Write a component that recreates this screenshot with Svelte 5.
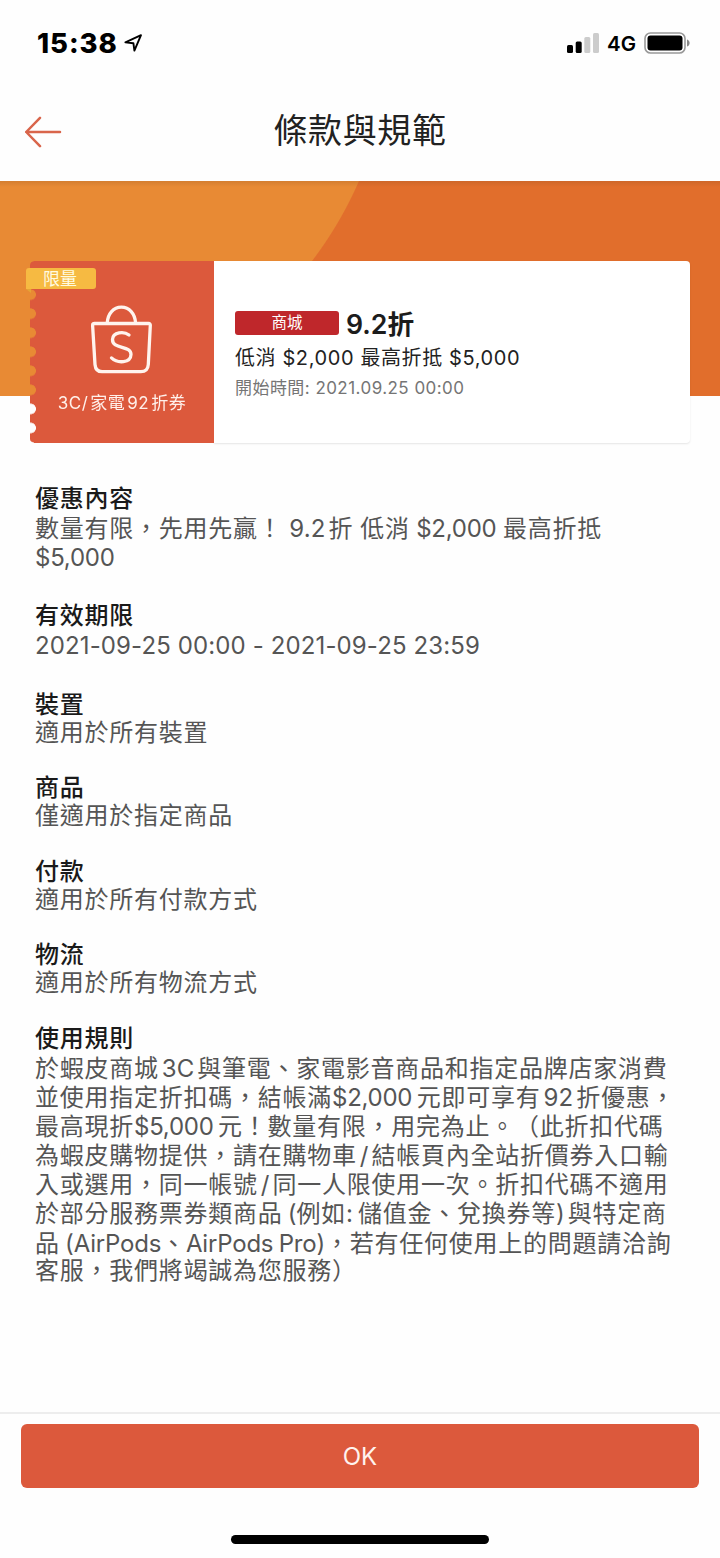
<script>
  const sections = [
    { title: '優惠內容', mixed: true, lines: ['數量有限，先用先贏！ 9.2折 低消 $2,000 最高折抵', '$5,000'] },
    { title: '有效期限', mixed: true, lines: ['2021-09-25 00:00 - 2021-09-25 23:59'] },
    { title: '裝置', lines: ['適用於所有裝置'] },
    { title: '商品', lines: ['僅適用於指定商品'] },
    { title: '付款', lines: ['適用於所有付款方式'] },
    { title: '物流', lines: ['適用於所有物流方式'] },
    {
      title: '使用規則',
      mixed: true,
      lines: [
        '於蝦皮商城3C與筆電、家電影音商品和指定品牌店家消費',
        '並使用指定折扣碼，結帳滿$2,000元即可享有92折優惠，',
        '最高現折$5,000元！數量有限，用完為止。（此折扣代碼',
        '為蝦皮購物提供，請在購物車/結帳頁內全站折價券入口輸',
        '入或選用，同一帳號/同一人限使用一次。折扣代碼不適用',
        '於部分服務票券類商品 (例如: 儲值金、兌換券等)與特定商',
        '品 (AirPods、AirPods Pro)，若有任何使用上的問題請洽詢',
        '客服，我們將竭誠為您服務）'
      ]
    }
  ];

  // Splits a line into Chinese and Latin runs, which are tracked separately.
  function runs(line) {
    const parts = line.match(/[\x20-\x7e]+|[^\x20-\x7e]+/g) ?? [];
    return parts.map((text, i) => {
      const latin = /^[\x20-\x7e]/.test(text);
      return {
        text,
        latin,
        money: text.includes('$'),
        tight: /[A-Za-z]{3}|^ \(|^: /.test(text),
        before: latin && i > 0 && /^[0-9A-Za-z/]/.test(text) && !/[、，]$/.test(parts[i - 1]),
        after: latin && i < parts.length - 1 && /[0-9A-Za-z/)]$/.test(text) && !/^[、，]/.test(parts[i + 1])
      };
    });
  }
</script>

{#snippet mixed(line)}{#each runs(line) as r}<span class:latin={r.latin} class:money={r.money} class:tight={r.tight} class:before={r.before} class:after={r.after}>{r.text}</span>{/each}{/snippet}

<div class="screen">
  <div class="status">
    <span class="time">15:38</span>
    <svg class="loc" width="20" height="20" viewBox="0 0 20 20"><path d="M2.4 9.4 L18 2.2 L11.4 17.6 L10.4 10.2 Z" fill="none" stroke="#000" stroke-width="1.9" stroke-linejoin="round" /></svg>
    <svg class="bars" width="33" height="21" viewBox="0 0 33 21">
      <rect x="0" y="12" width="6" height="8" rx="1.5" />
      <rect x="8.7" y="8.5" width="6" height="11.5" rx="1.5" />
      <rect x="17.3" y="4" width="6" height="16" rx="1.5" fill="#ccc" />
      <rect x="26" y="0" width="6" height="20" rx="1.5" fill="#ccc" />
    </svg>
    <span class="net">4G</span>
    <svg class="battery" width="47" height="22" viewBox="0 0 47 22">
      <rect x="1" y="1" width="40" height="20" rx="5.5" fill="none" stroke="#999" stroke-width="1.6" />
      <rect x="3.5" y="3.5" width="35" height="15" rx="3" />
      <path d="M43 7.5 C46.5 8.5 46.5 13.5 43 14.5 Z" fill="#888" />
    </svg>
  </div>

  <header>
    <svg width="38" height="32" viewBox="0 0 38 32"><path d="M15 1.8 L1.2 16 L15 30.2 M1.2 16 H35" fill="none" stroke="#d9654b" stroke-width="2.5" stroke-linecap="round" stroke-linejoin="round" /></svg>
    <h1>條款與規範</h1>
  </header>

  <div class="banner">
    <div class="card">
      <div class="ticket">
        <div class="paper">
          <svg width="62" height="70" viewBox="0 0 62 70" fill="none" stroke="#fff4ee" stroke-width="3.3" stroke-linecap="round" stroke-linejoin="round">
            <path d="M3.4 18.5 H57.6 Q59.4 18.5 59.3 20.5 L57.3 59.5 Q56.8 66.7 49.9 66.7 H11.1 Q4.6 66.7 4 59.5 L1.6 20.5 Q1.6 18.5 3.4 18.5 Z" />
            <path d="M16.2 18 C16.8 8.5 22.4 2.2 30.4 2.2 S44 8.5 44.6 18" />
            <path d="M38 30 C33.2 26.2 21.8 26.7 21.5 34.5 C21.4 44.7 40.2 40 40 49.5 C39.7 58.2 26.7 58.7 20.5 52.9" />
          </svg>
          <div class="name">{@render mixed('3C/家電92折券')}</div>
        </div>
        <div class="tag">限量</div>
      </div>
      <div class="info">
        <div class="top"><span class="mall">商城</span><b>9.2折</b></div>
        <div class="min">低消 $2,000 最高折抵 $5,000</div>
        <div class="start">開始時間: 2021.09.25 00:00</div>
      </div>
    </div>
  </div>

  <main>
    {#each sections as s}
      <section class:mixed={s.mixed}>
        <h2>{s.title}</h2>
        {#each s.lines as line}
          <p>{@render mixed(line)}</p>
        {/each}
      </section>
    {/each}
  </main>

  <footer>
    <button>OK</button>
    <div class="home"></div>
  </footer>
</div>

<style>
  :global(body) { background: #fefefe; }
  .screen {
    width: 720px;
    height: 1558px;
    display: flex;
    flex-direction: column;
    overflow: hidden;
    font-family: Inter, 'Noto Sans CJK TC', sans-serif;
    text-spacing-trim: space-all;
    white-space: nowrap;
    color: #222;
  }
  .status {
    height: 86px;
    box-sizing: border-box;
    padding: 0 29px 0 37px;
    display: flex;
    align-items: center;
    flex: none;
  }
  .time { font-size: 27.5px; font-weight: 800; color: #000; letter-spacing: 0.95px; width: 86px; }
  .bars { margin-left: auto; margin-right: 7px; }
  .net { font-size: 20.5px; font-weight: 600; color: #000; width: 28px; margin: 1px 9px 0 0; }
  header {
    height: 95px;
    flex: none;
    display: grid;
    grid-template-columns: 38px 1fr 38px;
    align-items: center;
    padding: 0 25px;
    box-sizing: border-box;
  }
  header svg { margin-bottom: 4px; }
  h1 { margin: 0 0 6px; font-size: 34px; font-weight: 400; letter-spacing: 0.6px; text-align: center; line-height: 44px; }
  .banner {
    height: 215px;
    flex: none;
    box-sizing: border-box;
    padding: 80px 30px 0;
    background:
      linear-gradient(rgba(120, 70, 30, 0.18), transparent 6px),
      radial-gradient(circle 386px at 5px -154px, #e88a34 385.5px, #e16e2c 386.5px);
  }
  .card { display: flex; height: 182px; }
  .ticket { width: 184px; position: relative; }
  .paper {
    height: 100%;
    box-sizing: border-box;
    padding-top: 44px;
    display: flex;
    flex-direction: column;
    align-items: center;
    background: #dc593c;
    border-radius: 4px 0 0 4px;
    mask: radial-gradient(circle 5.5px at 0.6px 9.5px, transparent 5px, #000 5.6px) 0 5.1px / 100% 19.05px;
  }
  .name { margin-top: 15px; font-size: 17px; line-height: 26px; color: #fff0ea; letter-spacing: 0.5px; }
  .name .before { margin-left: 2px; }
  .name .after { margin-right: 2px; }
  .tag {
    position: absolute;
    left: -4px;
    top: 7px;
    width: 70px;
    height: 21px;
    box-sizing: border-box;
    padding-left: 17px;
    border-radius: 3px 3px 3px 0;
    background: #f6ba42;
    color: #fffbe0;
    font-size: 17px;
    line-height: 23px;
  }
  .tag::after {
    content: '';
    position: absolute;
    left: 0;
    top: 21px;
    border-top: 4px solid #e5a336;
    border-left: 5px solid transparent;
  }
  .info {
    flex: 1;
    box-sizing: border-box;
    padding: 46px 0 0 21px;
    background: #fff;
    border-radius: 0 4px 4px 0;
    box-shadow: 0 1px 2px rgba(0, 0, 0, 0.1);
  }
  .top { display: flex; align-items: center; height: 32px; gap: 7px; margin-bottom: 2px; }
  .mall {
    width: 104px;
    height: 24px;
    border-radius: 3px;
    background: #bf272b;
    color: #fff;
    font-size: 15.5px;
    line-height: 24px;
    text-align: center;
  }
  b { font-size: 26.7px; font-weight: 600; line-height: 32px; padding-top: 2px; color: #1c1c1c; }
  .min { font-size: 20px; line-height: 34px; letter-spacing: 0.6px; color: #222; }
  .start { font-size: 17px; line-height: 27px; letter-spacing: 0.45px; color: #757575; }
  main { flex: 1; padding: 88px 35px 0; }
  section { margin-bottom: 27.5px; }
  h2 { margin: 0; font-size: 24px; font-weight: 500; letter-spacing: 0.75px; line-height: 29px; height: 29px; color: #1a1a1a; }
  p { margin: 0; font-size: 24px; line-height: 27px; height: 27px; letter-spacing: 0.75px; color: #555; white-space: pre; }
  .mixed { margin-bottom: 29.3px; }
  .mixed h2 { margin-bottom: 0.8px; }
  .mixed p { line-height: 29.2px; height: 29.2px; }
  .mixed p:nth-child(9) { line-height: 25px; height: 25px; }
  p .latin { letter-spacing: 0.12px; }
  p .money { letter-spacing: -0.25px; }
  p .money.after { margin-right: 4.5px; }
  p .tight { letter-spacing: -0.2px; word-spacing: -1.2px; }
  .before { margin-left: 3px; }
  .after { margin-right: 3px; }
  footer {
    height: 146px;
    flex: none;
    box-sizing: border-box;
    border-top: 2px solid #ededed;
    padding: 10px 21px 0;
    display: flex;
    flex-direction: column;
    align-items: center;
  }
  button {
    width: 100%;
    height: 64px;
    flex: none;
    border: 0;
    border-radius: 6px;
    background: #dc593c;
    color: #fff3ee;
    font: 400 24px Inter, sans-serif;
  }
  .home { margin-top: 47px; width: 258px; height: 9px; border-radius: 5px; background: #000; }
</style>
